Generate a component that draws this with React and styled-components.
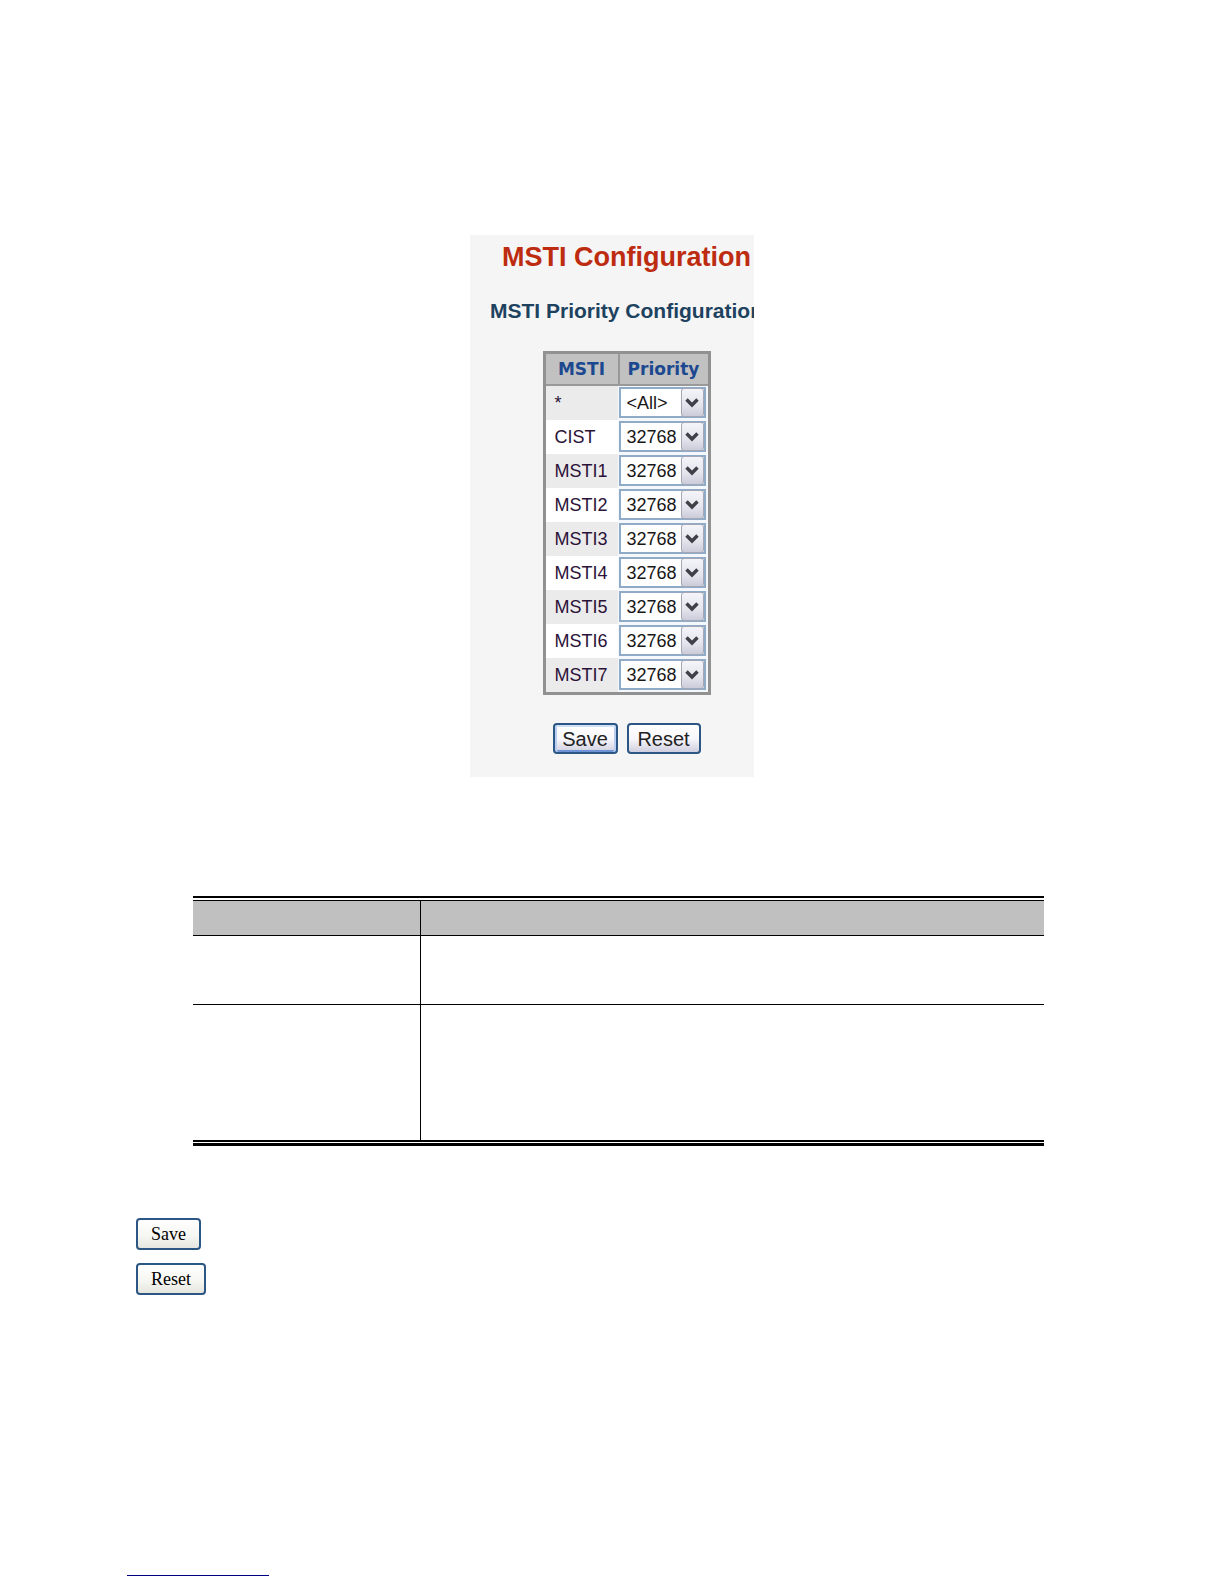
import React from 'react';
import styled, { createGlobalStyle } from 'styled-components';

const GlobalStyle = createGlobalStyle`
  body {
    margin: 0;
    background: #fff;
    font-family: "Liberation Sans", Arial, sans-serif;
  }
`;

const Page = styled.main`
  display: flex;
  flex-direction: column;
  padding: 235px 127px 8px;
`;

const Panel = styled.form`
  display: flex;
  flex-direction: column;
  align-items: center;
  align-self: center;
  box-sizing: border-box;
  width: 284px;
  padding: 6px 0 23px 29px;
  overflow: hidden;
  background: #f5f5f5;
`;

const Title = styled.h1`
  margin: 0;
  color: #bd2c10;
  font-size: 27px;
  line-height: 32px;
  white-space: nowrap;
`;

const Subtitle = styled.h2`
  margin: 26px 0 28px;
  color: #1d425f;
  font-size: 21px;
  line-height: 24px;
  white-space: nowrap;
`;

const PriorityTable = styled.table`
  border: 3px solid #919191;
  border-spacing: 0;
  background: #fff;
`;

const HeadCell = styled.th`
  box-sizing: border-box;
  height: 32px;
  padding: 0 8px;
  border-bottom: 2px solid #999;
  background: #c1c1c1;
  color: #1c4890;
  font-family: "DejaVu Sans", Verdana, sans-serif;
  font-size: 17px;
  line-height: 20px;

  & + & {
    border-left: 2px solid #999;
  }
`;

const Row = styled.tr`
  background: #fff;

  &:nth-child(odd) {
    background: #ebebeb;
  }
`;

const NameCell = styled.th`
  box-sizing: border-box;
  width: 72px;
  padding: 0 0 0 9px;
  color: #2b1238;
  font-size: 18px;
  font-weight: normal;
  line-height: 20px;
  text-align: left;
`;

const SelectCell = styled.td`
  padding: 1px 2px 2px 1px;
  background: #f4f8fc;
`;

const SelectBox = styled.div`
  display: grid;
  align-items: center;
  width: 87px;
`;

const Select = styled.select`
  grid-area: 1 / 1;
  appearance: none;
  box-sizing: border-box;
  width: 100%;
  height: 31px;
  margin: 0;
  padding: 0 0 0 6px;
  border: 2px solid #8fabc7;
  border-radius: 0;
  background: #fff;
  color: #171717;
  font-family: inherit;
  font-size: 18px;
`;

const Arrow = styled.span`
  grid-area: 1 / 1;
  display: flex;
  align-items: center;
  justify-content: center;
  justify-self: end;
  box-sizing: border-box;
  width: 23px;
  height: 29px;
  margin-right: 2px;
  border: 1px solid #a3a7b6;
  border-radius: 3px;
  background: linear-gradient(#f4f4f9, #e4e4ed 60%, #cbccd9);
  pointer-events: none;
  z-index: 1;
`;

const Buttons = styled.div`
  display: flex;
  gap: 9px;
  margin-top: 28px;
`;

const Button = styled.button`
  box-sizing: border-box;
  height: 31px;
  width: ${(props) => (props.$wide ? '74px' : '65px')};
  padding: 0;
  border: 2px solid #2c5784;
  border-radius: 4px;
  background: linear-gradient(#fff, #f7f7fb 50%, #d0cfe0);
  box-shadow: ${(props) =>
    props.$active ? 'inset 0 2px #cfe0f8, inset 2px 0 #b9cef0, inset -2px 0 #b9cef0, inset 0 -2px #6e94d6' : 'none'};
  color: #222;
  font-family: inherit;
  font-size: 20px;
  line-height: 24px;
`;

const InfoTable = styled.table`
  align-self: stretch;
  margin: 119px 53px 72px 66px;
  padding: 2px 0 1px;
  border-top: 2px solid #000;
  border-bottom: 3px solid #000;
  border-spacing: 0;
  table-layout: fixed;
`;

const InfoHead = styled.th`
  box-sizing: border-box;
  height: 36px;
  padding: 0;
  border-top: 1px solid #000;
  border-bottom: 1px solid #000;
  background: #c0c0c0;

  &:first-child {
    width: 228px;
    border-right: 1px solid #000;
  }
`;

const InfoCell = styled.td`
  box-sizing: border-box;
  height: ${(props) => (props.$last ? '137px' : '69px')};
  padding: 0;
  border-bottom: ${(props) => (props.$last ? '2px' : '1px')} solid #000;

  &:first-child {
    border-right: 1px solid #000;
  }
`;

const Actions = styled.div`
  display: flex;
  flex-direction: column;
  gap: 13px;
  padding-left: 9px;
`;

const PlainButton = styled(Button)`
  width: ${(props) => (props.$wide ? '70px' : '65px')};
  height: 32px;
  background: linear-gradient(#fff, #f5f5f1 60%, #e6e6df);
  color: #000;
  font-family: "Liberation Serif", "Times New Roman", serif;
  font-size: 18px;
`;

const FooterRule = styled.hr`
  width: 142px;
  margin: 280px 0 0;
  border: 0;
  border-top: 1px solid #000080;
`;

const rows = [
  { name: '*', value: '<All>' },
  { name: 'CIST', value: '32768' },
  { name: 'MSTI1', value: '32768' },
  { name: 'MSTI2', value: '32768' },
  { name: 'MSTI3', value: '32768' },
  { name: 'MSTI4', value: '32768' },
  { name: 'MSTI5', value: '32768' },
  { name: 'MSTI6', value: '32768' },
  { name: 'MSTI7', value: '32768' },
];

function PriorityRow({ row, id }) {
  return (
    <Row>
      <NameCell scope="row">
        <label htmlFor={id}>{row.name}</label>
      </NameCell>
      <SelectCell>
        <SelectBox>
          <Select id={id} defaultValue={row.value}>
            <option>{row.value}</option>
          </Select>
          <Arrow>
            <svg width="14" height="10" viewBox="0 0 14 10" aria-hidden="true">
              <path d="M1.5 1.5 L7 7 L12.5 1.5" fill="none" stroke="#404048" strokeWidth="3.4" />
            </svg>
          </Arrow>
        </SelectBox>
      </SelectCell>
    </Row>
  );
}

function App() {
  return (
    <>
      <GlobalStyle />
      <Page>
        <Panel onSubmit={(e) => e.preventDefault()}>
          <Title>MSTI Configuration</Title>
          <Subtitle>MSTI Priority Configuration</Subtitle>
          <PriorityTable>
            <thead>
              <tr>
                <HeadCell scope="col">MSTI</HeadCell>
                <HeadCell scope="col">Priority</HeadCell>
              </tr>
            </thead>
            <tbody>
              {rows.map((row, i) => (
                <PriorityRow key={row.name} row={row} id={`priority-${i}`} />
              ))}
            </tbody>
          </PriorityTable>
          <Buttons>
            <Button type="submit" $active>Save</Button>
            <Button type="reset" $wide>Reset</Button>
          </Buttons>
        </Panel>

        <InfoTable>
          <thead>
            <tr>
              <InfoHead />
              <InfoHead />
            </tr>
          </thead>
          <tbody>
            <tr>
              <InfoCell />
              <InfoCell />
            </tr>
            <tr>
              <InfoCell $last />
              <InfoCell $last />
            </tr>
          </tbody>
        </InfoTable>

        <Actions>
          <PlainButton type="button">Save</PlainButton>
          <PlainButton type="button" $wide>Reset</PlainButton>
        </Actions>
        <FooterRule />
      </Page>
    </>
  );
}

export default App;
